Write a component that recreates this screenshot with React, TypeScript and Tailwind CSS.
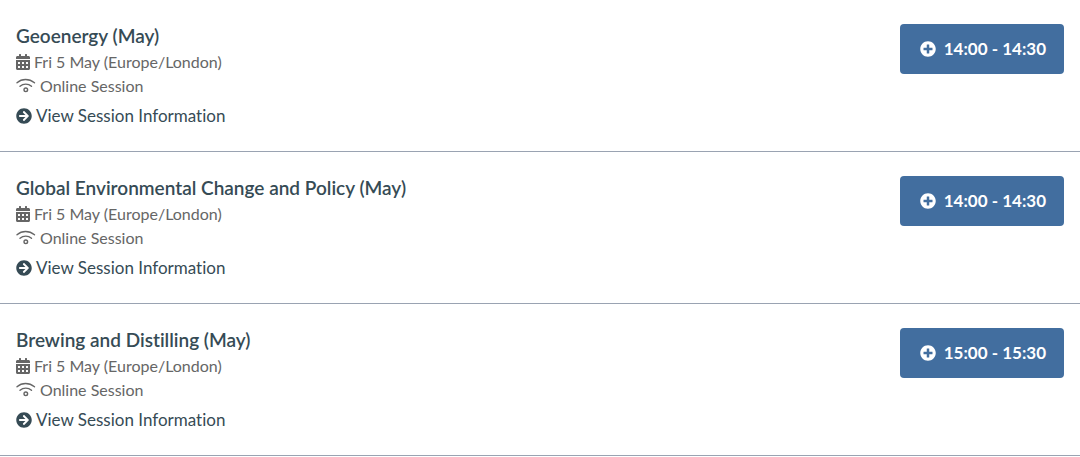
import { FaArrowCircleRight, FaCalendarAlt, FaPlusCircle } from "react-icons/fa";

const sessions = [
  { id: "geoenergy", title: "Geoenergy (May)", time: "14:00 - 14:30" },
  {
    id: "environment",
    title: "Global Environmental Change and Policy (May)",
    time: "14:00 - 14:30",
  },
  { id: "brewing", title: "Brewing and Distilling (May)", time: "15:00 - 15:30" },
];

const WifiIcon = () => (
  <svg
    viewBox="0 0 20 16"
    className="w-5 h-4 shrink-0"
    fill="none"
    stroke="currentColor"
    strokeWidth="1.4"
    strokeLinecap="round"
    aria-hidden="true"
  >
    <path d="M1 4.800C6 .4 13 .4 18.500 4.800" />
    <path d="M4 8.300c3.300-2.900 8.200-2.900 11.500 0" />
    <circle cx="9.800" cy="11.800" r="1.800" />
  </svg>
);

const SessionRow = ({ title, time }: { title: string; time: string }) => (
  <li className="flex items-start justify-between gap-4 px-4 pt-6 pb-[23px] border-b border-[#9aa3b2]">
    <div>
      <h2 className="text-[19px] leading-6 font-semibold">{title}</h2>
      <p className="flex items-center gap-1 text-base leading-7 text-[#666666]">
        <FaCalendarAlt className="w-3.5 h-4 shrink-0" />
        Fri 5 May (Europe/London)
      </p>
      <p className="flex items-center gap-1 text-base leading-5 text-[#666666]">
        <WifiIcon />
        Online Session
      </p>
      <a href="#" className="mt-2 flex items-center gap-1 text-[17px] leading-6">
        <FaArrowCircleRight className="w-4 h-4 shrink-0" />
        View Session Information
      </a>
    </div>
    <button className="flex items-center gap-2 h-[50px] pl-5 pr-[18px] rounded-sm bg-[#426e9f] text-white text-[17px] font-bold whitespace-nowrap">
      <FaPlusCircle className="w-4 h-4 shrink-0" />
      {time}
    </button>
  </li>
);

const App = () => (
  <main className="bg-white font-['Lato',sans-serif] text-[#364b55] [font-variant-ligatures:none]">
    <ul>
      {sessions.map((session) => (
        <SessionRow key={session.id} title={session.title} time={session.time} />
      ))}
    </ul>
  </main>
);

export default App;
